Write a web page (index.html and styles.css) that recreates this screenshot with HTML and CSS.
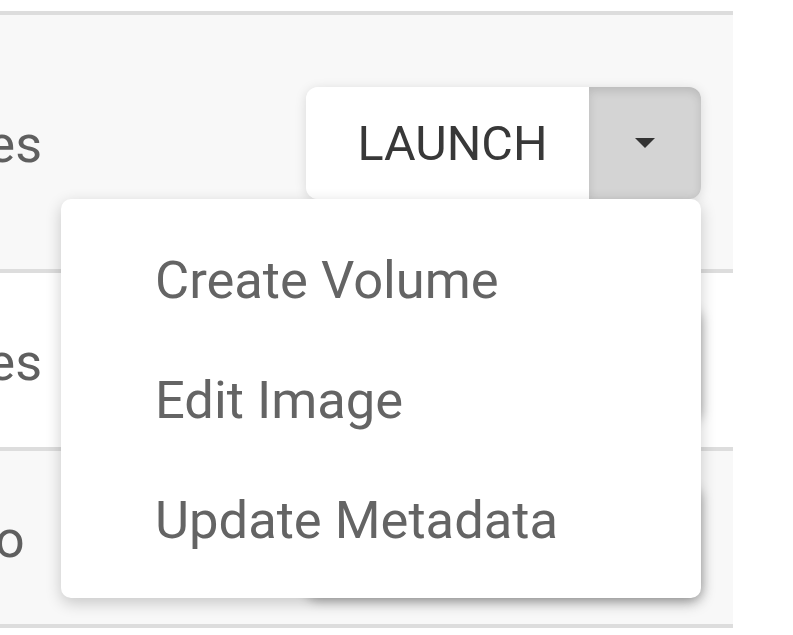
FILE: index.html
```html
<!DOCTYPE html>
<html lang="en">
<head>
<meta charset="utf-8">
<title>Images</title>
<link rel="stylesheet" href="styles.css">
</head>
<body>
<div class="table">
  <div class="row row-1 striped">
    <div class="cell-text">Yes</div>
    <div class="btn-group btn-group-light">
      <button class="btn-main">LAUNCH</button>
      <button class="btn-toggle active"><span class="caret"></span></button>
      <ul class="menu">
        <li class="menu-item">Create Volume</li>
        <li class="menu-item">Edit Image</li>
        <li class="menu-item">Update Metadata</li>
      </ul>
    </div>
  </div>
  <div class="row row-2">
    <div class="cell-text">Yes</div>
    <div class="btn-group">
      <button class="btn-main">LAUNCH</button>
      <button class="btn-toggle"><span class="caret"></span></button>
    </div>
  </div>
  <div class="row row-3 striped">
    <div class="cell-text">No</div>
    <div class="btn-group">
      <button class="btn-main">LAUNCH</button>
      <button class="btn-toggle"><span class="caret"></span></button>
    </div>
  </div>
</div>
</body>
</html>
```

FILE: styles.css
```css
html, body {
  margin: 0;
  padding: 0;
  background: #ffffff;
  font-family: Roboto, "Liberation Sans", sans-serif;
  overflow: hidden;
}

.table {
  margin-top: 11px;
  margin-left: -42px;
  width: 775px;
  border-bottom: 4px solid #dddddd;
}

.row {
  display: flex;
  align-items: center;
  justify-content: space-between;
  border-top: 4px solid #dddddd;
  background: #ffffff;
  padding-right: 32px;
}

.row.striped {
  background: #f8f8f8;
}

.row-1 { height: 254px; }
.row-2 { height: 174px; }
.row-3 { height: 173px; }

.cell-text {
  font-size: 52px;
  color: #5f5f5f;
  margin-top: 4px;
}

.btn-group {
  position: relative;
  display: flex;
  height: 112px;
  border-radius: 12px;
  box-shadow: 0 6px 12px rgba(0, 0, 0, 0.35);
}

.btn-group-light {
  box-shadow: 0 2px 12px rgba(0, 0, 0, 0.13);
  margin-top: 2px;
}

.btn-main,
.btn-toggle {
  border: 0;
  margin: 0;
  font-family: inherit;
  cursor: pointer;
}

.btn-main {
  width: 283px;
  padding: 0 0 0 10px;
  background: #ffffff;
  color: #383838;
  font-size: 48.5px;
  border-radius: 12px 0 0 12px;
}

.btn-toggle {
  width: 112px;
  padding: 0;
  background: #d6d6d6;
  border-radius: 0 12px 12px 0;
  display: flex;
  align-items: center;
  justify-content: center;
}

.btn-toggle.active {
  background: #d4d4d4;
  box-shadow: inset 0 4px 10px rgba(0, 0, 0, 0.12);
}

.caret {
  display: block;
  width: 0;
  height: 0;
  border-left: 10px solid transparent;
  border-right: 10px solid transparent;
  border-top: 10px solid #333333;
  margin-top: -1px;
}

.menu {
  position: absolute;
  top: 100%;
  right: 0;
  width: 640px;
  margin: 0;
  padding: 21px 0 18px;
  list-style: none;
  background: #ffffff;
  border-radius: 10px;
  box-shadow: 0 5px 16px rgba(0, 0, 0, 0.2);
  z-index: 10;
}

.menu-item {
  padding-left: 94px;
  font-size: 52.5px;
  line-height: 120px;
  color: #646464;
  white-space: nowrap;
}
```
